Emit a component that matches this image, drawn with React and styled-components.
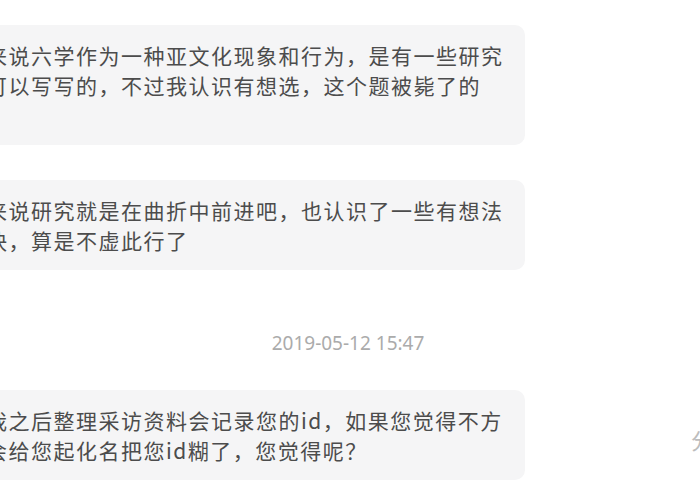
import React from "react";
import styled, { createGlobalStyle } from "styled-components";

const Global = createGlobalStyle`
  html, body {
    margin: 0;
    padding: 0;
    background: #ffffff;
    overflow: hidden;
  }
  body {
    font-family: "Noto Sans CJK SC", "Noto Sans", sans-serif;
  }
`;

const Chat = styled.div`
  width: 700px;
  height: 490px;
  overflow: hidden;
  box-sizing: border-box;
  padding-top: 25px;
  display: flex;
  flex-direction: column;
`;

const Row = styled.div`
  display: flex;
  align-items: flex-start;
  justify-content: space-between;
  margin-bottom: ${(p) => p.$gap || 0}px;
`;

const Bubble = styled.div`
  box-sizing: border-box;
  width: 565px;
  margin-left: -40px;
  padding: 15px 20px 15px 26px;
  background: #f5f5f6;
  border-radius: 10px;
  color: #4c4c4c;
  font-size: 21px;
  letter-spacing: 1.5px;
  line-height: 30px;
`;

const Line = styled.div`
  white-space: nowrap;
  min-height: 30px;
`;

const Time = styled.div`
  margin: 58px 0 32px;
  text-align: center;
  padding-right: 4px;
  color: #ababab;
  font-family: "Noto Sans", sans-serif;
  font-size: 19px;
  line-height: 30px;
`;

const Peek = styled.span`
  margin-top: 34px;
  margin-right: -13px;
  color: #bdbdbd;
  font-size: 22px;
  line-height: 30px;
`;

export default function App() {
  return (
    <>
      <Global />
      <Chat>
        <Row $gap={35}>
          <Bubble>
            <Line>来说六学作为一种亚文化现象和行为，是有一些研究</Line>
            <Line>可以写写的，不过我认识有想选，这个题被毙了的</Line>
            <Line>{"\u00a0"}</Line>
          </Bubble>
        </Row>
        <Row>
          <Bubble>
            <Line>来说研究就是在曲折中前进吧，也认识了一些有想法</Line>
            <Line>快，算是不虚此行了</Line>
          </Bubble>
        </Row>
        <Time>2019-05-12 15:47</Time>
        <Row>
          <Bubble>
            <Line>我之后整理采访资料会记录您的id，如果您觉得不方</Line>
            <Line>会给您起化名把您id糊了，您觉得呢？</Line>
          </Bubble>
          <Peek>分</Peek>
        </Row>
      </Chat>
    </>
  );
}
